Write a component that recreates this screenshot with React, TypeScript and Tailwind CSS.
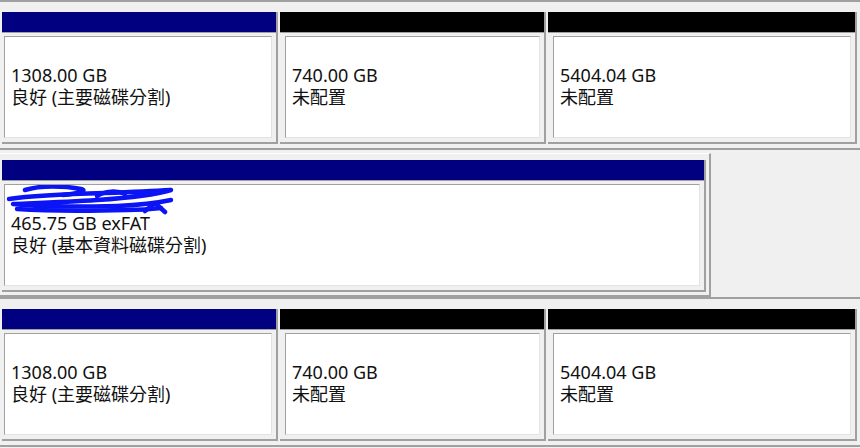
import React from 'react';

type Part = {
  head: string;
  width: string;
  padLeft: string;
  size: string;
  status: string;
};

const row: Part[] = [
  { head: 'bg-[#000080]', width: 'w-[276px]', padLeft: 'pl-[2px]', size: '1308.00 GB', status: '良好 (主要磁碟分割)' },
  { head: 'bg-black', width: 'w-[266px]', padLeft: 'pl-[5px]', size: '740.00 GB', status: '未配置' },
  { head: 'bg-black', width: 'w-[309px]', padLeft: 'pl-[5px]', size: '5404.04 GB', status: '未配置' },
];

// blue marker scribble hiding the volume label
function Scribble() {
  return (
    <svg
      className="absolute left-0 top-0"
      width="172"
      height="30"
      viewBox="0 0 172 30"
      fill="none"
      stroke="#0a14f5"
      strokeWidth="4.5"
      strokeLinecap="round"
      strokeLinejoin="round"
    >
      <path d="M20 5 C36 0, 60 1, 76 4 C84 6, 70 9, 58 10" />
      <path d="M4 14 C30 10, 62 9, 100 8 C128 7, 150 6, 166 5 C150 10, 122 13, 92 15 C62 17, 32 18, 8 19 C32 22, 72 22, 112 21 C136 20, 152 18, 166 15" />
      <path d="M12 24 C42 26, 82 26, 122 25 C136 25, 148 24, 156 23" />
      <path d="M92 11 C100 6, 112 5, 120 9" />
      <path d="M140 26 L150 18 L160 27" />
    </svg>
  );
}

function TextLines({ size, status }: { size: string; status: string }) {
  return (
    <div className="pl-[6px] pt-[5px] text-[18px] leading-[22px] text-[#111]">
      <div className="h-[22px]" />
      <div className="whitespace-nowrap">{size}</div>
      <div className="whitespace-nowrap">{status}</div>
    </div>
  );
}

function PartitionRow() {
  return (
    <div className="border-t-2 border-[#a0a0a0] pt-[10px] pb-[4px] pl-[2px] flex gap-[2px]">
      {row.map((p, i) => (
        <div key={i} className={`${p.width} flex flex-col border-r-2 border-b-2 border-[#a0a0a0]`}>
          <div className={`h-[20px] ${p.head}`} />
          <div className={`border-t border-[#a0a0a0] pt-[3px] pb-[4px] pr-[4px] ${p.padLeft}`}>
            <div className="h-[102px] bg-white border-t border-l border-[#a0a0a0] border-r-[#e3e3e3] border-b-[#e3e3e3] border-r border-b">
              <TextLines size={p.size} status={p.status} />
            </div>
          </div>
        </div>
      ))}
    </div>
  );
}

export default function App() {
  return (
    <div className="w-[860px] h-[448px] overflow-hidden bg-[#f0f0f0] font-['Noto_Sans','Noto_Sans_CJK_TC',sans-serif]">
      <PartitionRow />

      <div className="border-t-2 border-[#a0a0a0] pt-[3px]">
        <div className="w-[711px] border-t border-white border-r-2 border-b-2 border-r-[#a0a0a0] border-b-[#a0a0a0] pt-[6px] pb-[3px] pl-[2px] pr-[3px]">
          <div className="flex flex-col border-r-2 border-b-2 border-[#a0a0a0]">
            <div className="h-[20px] bg-[#000080]" />
            <div className="border-t border-[#a0a0a0] pt-[3px] pb-[4px] pr-[4px] pl-[2px]">
              <div className="relative h-[102px] bg-white border-t border-l border-[#a0a0a0] border-r-[#e3e3e3] border-b-[#e3e3e3] border-r border-b">
                <TextLines size="465.75 GB exFAT" status="良好 (基本資料磁碟分割)" />
                <Scribble />
              </div>
            </div>
          </div>
        </div>
      </div>

      <PartitionRow />
      <div className="border-t-2 border-[#a0a0a0]" />
    </div>
  );
}
